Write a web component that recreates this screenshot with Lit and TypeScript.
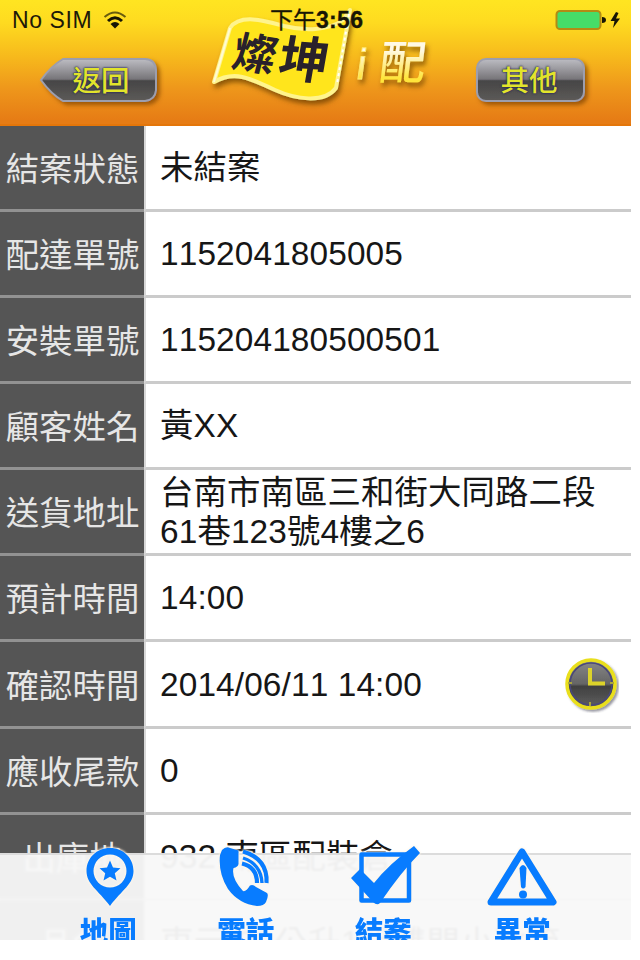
import { LitElement, html, css, svg } from "lit";
import { customElement } from "lit/decorators.js";

const rows: { label: string; value: string; clock?: boolean }[] = [
  { label: "結案狀態", value: "未結案" },
  { label: "配達單號", value: "1152041805005" },
  { label: "安裝單號", value: "115204180500501" },
  { label: "顧客姓名", value: "黃XX" },
  { label: "送貨地址", value: "台南市南區三和街大同路二段61巷123號4樓之6" },
  { label: "預計時間", value: "14:00" },
  { label: "確認時間", value: "2014/06/11 14:00", clock: true },
  { label: "應收尾款", value: "0" },
  { label: "出庫地", value: "932 南區配裝倉" },
  { label: "品名", value: "東元 28公升1級雙門小冰箱" },
];

const tabs = [
  {
    label: "地圖",
    icon: svg`<path fill-rule="evenodd" d="M36 1C22.500 1 12.500 11 12.500 24C12.500 37 24 43 36 59C48 43 59.500 37 59.500 24C59.500 11 49.500 1 36 1ZM36 7.500A16.500 16.500 0 1 1 36 40.500A16.500 16.500 0 1 1 36 7.500Z"/>
      <path d="M36 13.500L39 20.500L46.500 21.200L40.800 26.300L42.500 33.500L36 29.700L29.500 33.500L31.200 26.300L25.500 21.200L33 20.500Z"/>`,
  },
  {
    label: "電話",
    icon: svg`<path d="M11 3Q15 -1 19 1L27.500 3.500L27.500 17Q27 20 22.500 21Q20 31 32 44Q35 45 39 38.500Q42 37 45 40L56 46Q58 48 55 55Q53 59 46 59Q28 57 17 42Q7 26 9 8Z"/>
      <path fill="none" stroke="currentColor" stroke-width="4.200" d="M31 16.500Q46 20 46 36M32 4.500Q57 12 55.500 36"/>
      <path fill="none" stroke="currentColor" stroke-width="3.400" d="M32 11Q50 17 51 36"/>`,
  },
  {
    label: "結案",
    icon: svg`<path fill="none" stroke="currentColor" stroke-width="4.500" stroke-linejoin="round" d="M12.500 7.500H60V53.500H12.500Z"/>
      <path d="M2 31L11 22L25 36Q40 17 65 -1L71 6Q52 25 31 56Q28 59 24 55Z"/>`,
  },
  {
    label: "異常",
    icon: svg`<path fill="none" stroke="currentColor" stroke-width="7" stroke-linejoin="round" d="M36 5L67 55H5Z"/>
      <path d="M33.500 21Q37 15 40.500 21L39.500 40Q37 43 35 40Z"/><circle cx="37" cy="47.500" r="4"/>`,
  },
];

@customElement("app-root")
export class AppRoot extends LitElement {
  static styles = css`
    :host { display: block; width: 640px; height: 960px; background: #fff; overflow: hidden;
      font-family: "Liberation Sans", "Noto Sans CJK TC", sans-serif; }
    .phone { position: relative; width: 631px; height: 939.500px; overflow: hidden; background: #fff; }
    .header { position: relative; height: 125.600px; box-sizing: border-box; border-bottom: 2px solid #e4760a;
      background: linear-gradient(#ffe521 0%, #fedb20 18%, #f7ba1c 45%, #ee961b 72%, #e67c15 97%); }
    .status { display: flex; align-items: center; height: 40px; padding: 0 10px 0 12px; font-size: 23px;
      letter-spacing: .6px; color: #1d1a08; }
    .wifi { width: 24px; height: 19px; margin-left: 11px; }
    .power { width: 67px; height: 24px; margin-left: auto; }
    .time { position: absolute; z-index: 2; left: 270px; top: 6px; line-height: 28px; font-size: 23px; color: #171505;
      white-space: nowrap; -webkit-text-stroke: .3px #171505; }
    .time b { letter-spacing: .3px; }
    .nav { display: flex; justify-content: space-between; padding: 14px 38px 0 36px; }
    .btn { position: relative; display: block; height: 56px; }
    .back { width: 128px; }
    .other { width: 118px; }
    .btn svg { display: block; width: 100%; height: 100%; overflow: visible; }
    .btn span { position: absolute; inset: 0; text-align: center; line-height: 54px; font-size: 28.500px;
      font-weight: 500; color: #e2e42b; text-shadow: 0 0 2px #24245c, 0 0 2px #24245c; }
    .back span { padding-left: 2px; }
    .other span { padding-right: 10px; }
    .logo { position: absolute; left: 205px; top: 0; width: 230px; height: 115px; overflow: visible; }
    .row { display: grid; grid-template-columns: 144px 1fr; height: 86.150px; box-sizing: border-box; }
    .label, .value { box-sizing: border-box; display: flex; align-items: center; font-size: 33.400px; line-height: 38.800px; }
    .label { justify-content: center; background: #555; color: #e6e6e6; border-bottom: 3px solid #929292;
      padding: 6px 0 0 1px; white-space: nowrap; }
    .value { color: #161616; border-bottom: 3px solid #cbcbcb; border-left: 2px solid #d8d8d8; padding: 2px 12px 0 14px;
      font-kerning: none; letter-spacing: .12px; }
    .text { flex: 0 1 445px; word-break: break-all; }
    .wide { flex: none; white-space: nowrap; }
    .clock { width: 56px; height: 58px; flex: none; margin-left: auto; margin-top: -2px; }
    .bar { position: absolute; left: 0; right: 0; top: 853px; height: 87px; box-sizing: border-box;
      background: rgba(248, 248, 248, .958); backdrop-filter: blur(1.200px); border-top: 2px solid #dcdcdc;
      display: flex; padding-left: 41px; }
    .tab { width: 137.500px; display: flex; flex-direction: column; align-items: center; color: #087cff; }
    .tab svg { width: 72px; height: 60px; flex: none; margin-top: -8px; overflow: visible; fill: currentColor;
      filter: drop-shadow(0 0 1px #fff6e8) drop-shadow(0 0 1px #fff6e8); }
    .tab span { font-size: 28.500px; font-weight: 900; line-height: 36px; margin: 7px 3px 0 0; }
    .tab:last-child span { margin-right: 0; }
  `;

  render() {
    return html`<div class="phone">
      <div class="header">
        <div class="status">No SIM
          <svg class="wifi" viewBox="0 0 24 19" fill="none" stroke="#171505"><path stroke-width="2" opacity=".65" d="M1.500 6Q12-3 22.500 6"/><path stroke-width="3" d="M5 10Q12 3.500 19 10"/><path fill="#171505" stroke="none" d="M7.500 13Q12 9 16.500 13L12 17.500Z"/></svg>
          <svg class="power" viewBox="0 0 67 24"><rect x="2.500" y="3" width="44" height="18" rx="3.500" fill="#46dc68" stroke="#b38b13" stroke-width="2"/><path fill="#171505" d="M48 9Q52 9 52 12Q52 15 48 15ZM62 4L56.500 13H60.500L59 20L66 10.500H62L64.500 5Z"/></svg>
        </div>
        <span class="time">下午<b>3:56</b></span>
        <svg class="logo" viewBox="0 0 230 115">
          <defs>
            <filter id="ls" x="-20%" y="-20%" width="140%" height="150%"><feDropShadow dx="2" dy="4" stdDeviation="2.500" flood-color="#6b3d00" flood-opacity=".75"/></filter>
            <linearGradient id="lt" x2="0" y2="1"><stop offset=".25" stop-color="#fff9e4"/><stop offset=".8" stop-color="#ffe53a"/></linearGradient>
          </defs>
          <g filter="url(#ls)">
            <path fill="#ffe51e" stroke="#fff48d" stroke-width="4" stroke-linejoin="round" d="M25 28C35 13 61 21 79 26C99 31 123 31 138 20L145 10L131 88C119 104 90 99 70 90C45 78 29 70 9 82Z"/>
            <path fill="none" stroke="#fffbd3" stroke-width="2" d="M25 28L9 82"/><path fill="none" stroke="#fff" stroke-width="2" stroke-dasharray="3 3" d="M144 14L132 84"/>
          </g>
          <text transform="translate(25 66) rotate(8) skewX(-6)" font-size="43" font-weight="700" fill="#29212b">燦</text>
          <text transform="translate(71 76) rotate(4) skewX(-6)" font-size="50" font-weight="700" fill="#29212b">坤</text>
          <g fill="url(#lt)" filter="url(#ls)"><text transform="translate(150 79) skewX(-8)" font-size="43" stroke="#ffeb70" stroke-width=".8">i</text><text transform="translate(173 79) skewX(-7)" font-size="46" font-weight="500">配</text></g>
        </svg>
        <div class="nav">
          <div class="btn back"><svg viewBox="0 0 128 56">
            <defs><linearGradient id="bg" x2="0" y2="1"><stop stop-color="#bdbdc3"/><stop offset=".48" stop-color="#777579"/><stop offset=".52" stop-color="#464546"/><stop offset="1" stop-color="#5d5b58"/></linearGradient>
            <filter id="bs" x="-20%" y="-20%" width="150%" height="160%"><feDropShadow dx="3" dy="3" stdDeviation="2" flood-color="#7b4100" flood-opacity=".7"/></filter></defs>
            <path filter="url(#bs)" fill="url(#bg)" stroke="#9c9eae" stroke-width="2" d="M5 26Q15 12 27 5H109Q119 5 120 16V36Q119 46 109 47H27Q15 40 5 26Z"/></svg><span>返回</span></div>
          <div class="btn other"><svg viewBox="0 0 118 56"><rect x="2" y="5" width="107" height="42" rx="9" filter="url(#bs)" fill="url(#bg)" stroke="#9c9eae" stroke-width="2"/></svg><span>其他</span></div>
        </div>
      </div>
      ${rows.map(
        (r) => html`<div class="row"><div class="label">${r.label}</div>
          <div class="value"><span class="text ${r.label === "品名" ? "wide" : ""}">${r.value}</span>
          ${r.clock
            ? html`<svg class="clock" viewBox="0 0 56 58"><defs><linearGradient id="cg" x2="0" y2="1"><stop stop-color="#888"/><stop offset=".5" stop-color="#656565"/><stop offset=".55" stop-color="#404040"/><stop offset="1" stop-color="#606060"/></linearGradient>
                <filter id="cs" x="-20%" y="-20%" width="150%" height="150%"><feDropShadow dx="2" dy="2" stdDeviation="1.200" flood-color="#334" flood-opacity=".5"/></filter></defs>
                <circle cx="28" cy="29" r="24" fill="url(#cg)" stroke="#e9df1d" stroke-width="3.500" filter="url(#cs)"/>
                <circle cx="28" cy="29" r="21" fill="none" stroke="#49487a" stroke-width="1.500"/>
                <path fill="none" stroke="#dcd32a" stroke-width="4" d="M27 13V28.500H42"/><path stroke="#aaa53a" stroke-width="2" d="M5 28H9M47 28H51M27 47V51"/></svg>`
            : ""}</div></div>`
      )}
      <div class="bar">${tabs.map((t) => html`<div class="tab"><svg viewBox="0 0 72 60">${t.icon}</svg><span>${t.label}</span></div>`)}</div>
    </div>`;
  }
}
